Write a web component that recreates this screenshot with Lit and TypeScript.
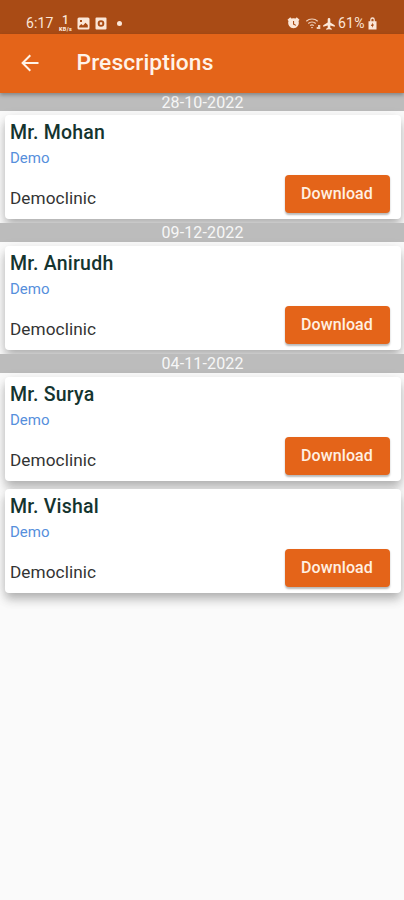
import { LitElement, html, css } from "lit";
import { customElement, property } from "lit/decorators.js";

interface Prescription { patient: string; note: string; clinic: string; }
interface DayGroup { date: string; items: Prescription[]; }

const entry = (patient: string): Prescription => ({ patient, note: "Demo", clinic: "Democlinic" });

const GROUPS: DayGroup[] = [
  { date: "28-10-2022", items: [entry("Mr. Mohan")] },
  { date: "09-12-2022", items: [entry("Mr. Anirudh")] },
  { date: "04-11-2022", items: [entry("Mr. Surya"), entry("Mr. Vishal")] },
];

@customElement("status-bar")
export class StatusBar extends LitElement {
  static styles = css`
    :host { display: flex; box-sizing: border-box; height: 34px; padding: 13px 27px 0 26px; background: #a94b15; color: #fbe6d8; font-size: 14px; line-height: 21px; }
    .group { display: flex; align-items: center; height: 21px; }
    .right { margin-left: auto; }
    .rate { display: flex; flex-direction: column; align-items: center; width: 14px; margin: 0 4px 0 5px; }
    .rate b { font-weight: 500; font-size: 12px; line-height: 11px; }
    .rate i { font-style: normal; font-weight: 900; font-size: 5.500px; line-height: 6px; letter-spacing: .3px; }
    .time { width: 27.5px; letter-spacing: 0.1px; }
    svg { display: block; fill: currentColor; }
    .photo { margin-right: 5px; }
    .dot { width: 5px; height: 5px; border-radius: 50%; background: currentColor; margin-left: 10px; }
    .alarm { margin-right: 5px; }
    .wifi { margin-right: 1.500px; }
    .plane { margin-right: 3px; }
    .level { width: 28.500px; letter-spacing: .2px; }
    .lock { margin-left: 1.500px; }
  `;
  render() {
    return html`
      <div class="group">
        <span class="time">6:17</span>
        <span class="rate"><b>1</b><i>KB/s</i></span>
        <svg class="photo" width="13" height="13" viewBox="0 0 13 13"><path fill-rule="evenodd" d="M2 .5h9A1.5 1.5 0 0 1 12.500 2v9a1.500 1.500 0 0 1-1.500 1.500H2A1.500 1.500 0 0 1 .5 11V2A1.500 1.500 0 0 1 2 .5zM2.200 10.500h8.600V8L8.500 5.800 6 8.500 4.300 7 2.200 9zM3 3v2h2V3z"/></svg>
        <svg width="12" height="13" viewBox="0 0 12 13"><path fill-rule="evenodd" d="M1.500.5h9a1 1 0 0 1 1 1v10a1 1 0 0 1-1 1h-9a1 1 0 0 1-1-1v-10a1 1 0 0 1 1-1zM6 3.200a3.300 3.300 0 1 0 0 6.600 3.300 3.300 0 0 0 0-6.600zM4.800 5.300h2.400v2.400H4.800z"/></svg>
        <span class="dot"></span>
      </div>
      <div class="group right">
        <svg class="alarm" width="13" height="13" viewBox="0 0 12 13"><path fill-rule="evenodd" d="M0 2.700 2.800.3l1.100 1.300a5.400 5.400 0 0 1 4.200 0L9.200.3 12 2.700l-1 1.400A5.300 5.300 0 1 1 1 4.100zM5.500 4v3.500l2.700 1.300.5-.9-2.100-1.100V4z"/></svg>
        <svg class="wifi" width="17" height="13" viewBox="0 0 16 13"><g fill="none" stroke="currentColor" stroke-width="1.200" opacity=".85"><path d="M.8 4.200a8.500 8.500 0 0 1 11.400 0M2.800 6.500a5.500 5.500 0 0 1 7.400 0M4.700 8.600a2.700 2.700 0 0 1 3.600 0"/></g><path d="M5.300 10h2.400l-1.200 1.600zM11.200 12v-2h1.300V8h2.300v4z" opacity=".85"/></svg>
        <svg class="plane" width="12" height="12" viewBox="0 0 12 12"><path d="M4.700 1.300a1.300 1.300 0 0 1 2.600 0v3.200l4.500 2.700v1.600L7.300 7.600v2.200l1.500 1v1L6 11.200l-2.800.6v-1l1.500-1V7.600L.2 8.800V7.200l4.500-2.700z"/></svg>
        <span class="level">61%</span>
        <svg class="lock" width="9" height="13" viewBox="0 0 9 12" preserveAspectRatio="none"><path fill-rule="evenodd" d="M2.200 4V2.600a2.300 2.300 0 0 1 4.600 0V4h1.700v7.500H.5V4zM3.400 4h2.200V2.600a1.100 1.100 0 0 0-2.200 0zM4.800 5 2.800 8.200h1.300V10l2-3H4.800z"/></svg>
      </div>
    `;
  }
}

@customElement("prescription-card")
export class PrescriptionCard extends LitElement {
  @property({ attribute: false }) item!: Prescription;
  static styles = css`
    :host { display: flex; flex-direction: column; box-sizing: border-box; height: 103.900px; margin: 4px 3.500px 4px 5px; padding: 6px 11px 0 5px; border-radius: 4px; background: #fff; box-shadow: 0 4px 8px -2px rgba(0,0,0,.14), 0 8px 10px rgba(0,0,0,.12), 0 4px 14px rgba(0,0,0,.12); }
    .patient { font-size: 19.500px; line-height: 23px; font-weight: 500; letter-spacing: .22px; color: #14342f; }
    .note { margin-top: 5px; font-size: 15px; line-height: 19px; color: #568fdc; letter-spacing: 0; }
    .row { display: flex; justify-content: space-between; margin-top: 7px; }
    .clinic { padding-top: 12px; font-size: 17.200px; line-height: 22px; letter-spacing: .08px; color: #333; }
    button { width: 105px; height: 38px; padding: 0; border: 0; border-radius: 4px; background: #e46419; color: #fff0e2; font: 500 16px/37px Roboto, sans-serif; letter-spacing: .1px; padding-bottom: 1.500px; box-shadow: 0 1.500px 2px rgba(0,0,0,.28); }
  `;
  render() {
    return html`
      <div class="patient">${this.item.patient}</div>
      <div class="note">${this.item.note}</div>
      <div class="row"><span class="clinic">${this.item.clinic}</span><button>Download</button></div>
    `;
  }
}

@customElement("app-root")
export class AppRoot extends LitElement {
  static styles = css`
    :host { display: block; height: 900px; overflow: hidden; background: #fafafa; font-family: Roboto, sans-serif; }
    .bar { display: flex; align-items: center; box-sizing: border-box; height: 58.500px; padding-left: 21px; background: #e46419; color: #fff3e8; position: relative; z-index: 1; box-shadow: 0 2px 4px rgba(0,0,0,.3); }
    .bar svg { width: 18px; height: 18px; fill: none; stroke: currentColor; stroke-width: 2; }
    h1 { margin: 0 0 0 37.500px; font-size: 22.800px; line-height: 28px; font-weight: 500; letter-spacing: .1px; }
    section { display: flex; flex-direction: column; }
    .date { height: 18.900px; line-height: 19px; background: #bcbcbc; color: #f7f7f7; font-size: 16px; text-align: center; letter-spacing: .13px; padding-left: 1px; }
  `;
  render() {
    return html`
      <status-bar></status-bar>
      <header class="bar">
        <svg viewBox="0 0 18 18"><path d="M17.500 9H2M9.300 1.300 1.600 9l7.700 7.700"/></svg>
        <h1>Prescriptions</h1>
      </header>
      <main>
        ${GROUPS.map((g) => html`
          <section>
            <div class="date">${g.date}</div>
            ${g.items.map((p) => html`<prescription-card .item=${p}></prescription-card>`)}
          </section>`)}
      </main>
    `;
  }
}
